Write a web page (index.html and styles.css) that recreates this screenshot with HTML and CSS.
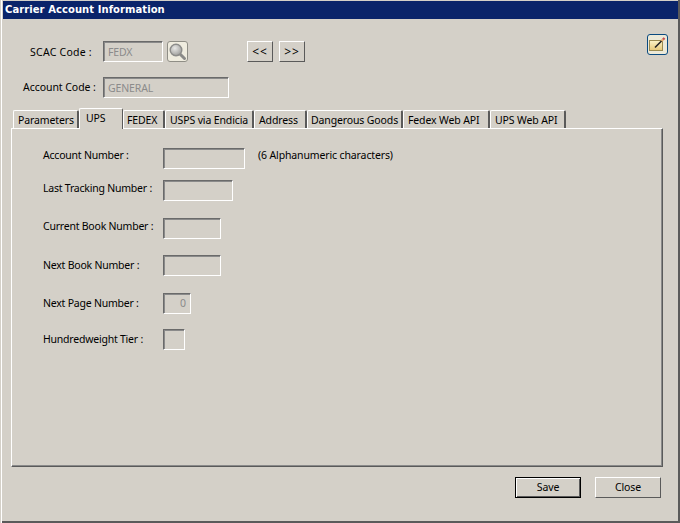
FILE: index.html
```html
<!DOCTYPE html>
<html lang="en">
<head>
<meta charset="utf-8">
<title>Carrier Account Information</title>
<link rel="stylesheet" href="styles.css">
</head>
<body>
<div class="window">
  <div class="titlebar">Carrier Account Information</div>
  <div class="head">
    <div class="head-row">
      <span class="label scac-label">SCAC Code :</span>
      <input class="field scac-input" value="FEDX" disabled>
      <button class="search-btn" type="button" aria-label="Search">
        <svg width="19" height="19" viewBox="0 0 19 19">
          <defs><radialGradient id="lens" cx="0.4" cy="0.35" r="0.7"><stop offset="0" stop-color="#e8e8e6"/><stop offset="1" stop-color="#9a9a98"/></radialGradient></defs>
          <path d="M11.5 11.5 L16.5 16.5" stroke="#8a8a88" stroke-width="3" stroke-linecap="round"/>
          <circle cx="8" cy="8" r="5.8" fill="url(#lens)" stroke="#8c8c8a" stroke-width="1.4"/>
        </svg>
      </button>
      <button class="nav-btn nav-first" type="button">&lt;&lt;</button>
      <button class="nav-btn nav-next" type="button">&gt;&gt;</button>
      <button class="edit-btn" type="button" aria-label="Edit">
        <svg width="17" height="15" viewBox="0 0 17 15">
          <defs><linearGradient id="pad" x1="0" y1="0" x2="0" y2="1"><stop offset="0" stop-color="#fbf3c8"/><stop offset="1" stop-color="#e6c878"/></linearGradient></defs>
          <rect x="0.5" y="3.5" width="13" height="10" fill="url(#pad)" stroke="#9a8a50"/>
          <path d="M6 10.5 L13 3.5" stroke="#222" stroke-width="1.6"/>
          <path d="M12.5 4 L14 2.5" stroke="#e8b070" stroke-width="2.4"/>
          <path d="M14 2.5 L15.5 1" stroke="#c85050" stroke-width="2.4"/>
        </svg>
      </button>
    </div>
    <div class="head-row account-row">
      <span class="label account-label">Account Code :</span>
      <input class="field account-input" value="GENERAL" disabled>
    </div>
  </div>
  <div class="tabs">
    <div class="tab t1">Parameters</div>
    <div class="tab tab-active t2">UPS</div>
    <div class="tab t3">FEDEX</div>
    <div class="tab t4">USPS via Endicia</div>
    <div class="tab t5">Address</div>
    <div class="tab t6">Dangerous Goods</div>
    <div class="tab t7">Fedex Web API</div>
    <div class="tab t8">UPS Web API</div>
  </div>
  <div class="panel">
    <div class="row r1">
      <span class="label row-label up3">Account Number :</span>
      <span class="field w82"></span>
      <span class="label hint">(6 Alphanumeric characters)</span>
    </div>
    <div class="row r2">
      <span class="label row-label up2">Last Tracking Number :</span>
      <span class="field w70"></span>
    </div>
    <div class="row r3">
      <span class="label row-label up2">Current Book Number :</span>
      <span class="field w58"></span>
    </div>
    <div class="row r4">
      <span class="label row-label">Next Book Number :</span>
      <span class="field w58"></span>
    </div>
    <div class="row r5">
      <span class="label row-label">Next Page Number :</span>
      <span class="field w28 num">0</span>
    </div>
    <div class="row r6">
      <span class="label row-label">Hundredweight Tier :</span>
      <span class="field w22"></span>
    </div>
  </div>
  <div class="actions">
    <button class="action default" type="button">Save</button>
    <button class="action" type="button">Close</button>
  </div>
</div>
</body>
</html>
```
FILE: styles.css
```css
* { box-sizing: border-box; }
html, body { margin: 0; padding: 0; }
body {
  width: 680px;
  height: 523px;
  overflow: hidden;
  background: #d4d0c8;
  font-family: "Noto Sans", sans-serif;
  font-size: 10.5px;
  letter-spacing: -0.13px;
  color: #000;
}
.window {
  width: 680px;
  height: 523px;
  padding: 1px 2px 2px 3px;
  background: #d4d0c8;
  box-shadow: inset 1px 0 0 #d4d0c8, inset 2px 0 0 #ffffff, inset -2px -2px 0 #5a5a5a;
  display: flex;
  flex-direction: column;
}
.titlebar {
  height: 18px;
  flex: none;
  background: #0a246a;
  color: #fff;
  font-family: "DejaVu Sans", sans-serif;
  font-weight: bold;
  font-size: 10px;
  letter-spacing: 0.07px;
  line-height: 17px;
  padding-left: 2px;
}
.head { padding-top: 15px; flex: none; height: 89px; }
.head-row { display: flex; align-items: flex-start; }
.label { white-space: nowrap; line-height: 12px; }
.field {
  display: block;
  height: 21px;
  flex: none;
  background: #d4d0c8;
  border: 1px solid;
  border-color: #6a6a6a #fff #fff #6a6a6a;
  box-shadow: inset 0 1px 0 #8a8a8a, inset 1px 0 0 #8a8a8a;
  font: inherit;
  letter-spacing: inherit;
  color: #8b8b8b;
  padding: 0 4px;
  line-height: 18px;
  margin: 0;
  -webkit-text-fill-color: #8b8b8b;
  opacity: 1;
}
.scac-label { width: 100px; padding: 5px 0 0 27px; margin-top: 7px; letter-spacing: 0.25px; }
.field.scac-input { width: 60px; margin-top: 7px; }
.search-btn {
  width: 21px;
  height: 21px;
  margin: 7px 0 0 4px;
  padding: 0;
  flex: none;
  background: #efecdf;
  border: 1px solid #8f8e86;
  border-radius: 3px;
  display: flex;
  align-items: center;
  justify-content: center;
}
.nav-btn, .action {
  font: inherit;
  letter-spacing: inherit;
  color: #000;
  background: #d4d0c8;
  border: 1px solid;
  border-color: #fff #5a5a5a #5a5a5a #fff;
  padding: 0;
  flex: none;
}
.nav-btn { width: 26px; height: 21px; margin-top: 7px; font-size: 12px; letter-spacing: 1px; }
.nav-first { margin-left: 59px; }
.nav-next { margin-left: 6px; }
.edit-btn {
  width: 21px;
  height: 21px;
  margin-left: 342px;
  padding: 0;
  flex: none;
  background: #ece9d8;
  border: 1px solid #0a4a80;
  border-radius: 3px;
  display: flex;
  align-items: center;
  justify-content: center;
}
.account-row { margin-top: 15px; }
.account-label { width: 100px; padding: 4px 0 0 20px; margin-top: 0; letter-spacing: -0.05px; }
.field.account-input { width: 126px; }
.tabs {
  display: flex;
  flex: none;
  height: 20px;
  padding-left: 10px;
  align-items: flex-end;
  position: relative;
  z-index: 1;
}
.tab {
  height: 18px;
  padding: 3px 0 0 4px;
  line-height: 12px;
  white-space: nowrap;
  background: #d4d0c8;
  border-top: 1px solid #fff;
  border-left: 1px solid #fff;
  border-right: 2px solid #5a5a5a;
  border-top-left-radius: 2px;
  border-top-right-radius: 2px;
}
.t1 { width: 66px; }
.t3 { width: 42px; padding-left: 3px; }
.t4 { width: 89px; }
.t5 { width: 53px; }
.t6 { width: 96px; padding-left: 3px; }
.t7 { width: 87px; }
.t8 { width: 76px; }
.tab.tab-active {
  height: 21px;
  width: 44px;
  padding: 3px 0 0 6px;
  margin-bottom: -1px;
  border-right: 1px solid #5a5a5a;
}
.panel {
  width: 652px;
  height: 339px;
  margin-left: 8px;
  flex: none;
  border: 1px solid;
  border-color: #fff #5a5a5a #5a5a5a #fff;
  box-shadow: inset -1px -1px 0 #8a8a8a;
  padding-left: 31px;
}
.row { display: flex; align-items: flex-start; height: 21px; }
.row-label { width: 120px; padding-top: 4px; letter-spacing: -0.22px; }
.row-label.up3 { padding-top: 1px; }
.row-label.up2 { padding-top: 2px; }
.r1 { margin-top: 19px; }
.r2 { margin-top: 11px; }
.r3 { margin-top: 17px; }
.r4 { margin-top: 16px; }
.r5 { margin-top: 17px; }
.r6 { margin-top: 15px; }
.w82 { width: 82px; }
.w70 { width: 70px; }
.w58 { width: 58px; }
.w28 { width: 28px; }
.w22 { width: 22px; }
.num { text-align: right; }
.hint { margin-left: 13px; padding-top: 1px; }
.actions {
  display: flex;
  justify-content: flex-end;
  gap: 14px;
  padding: 10px 17px 0 0;
}
.action { width: 66px; height: 21px; padding-bottom: 2px; }
.action.default { border-color: #000; box-shadow: inset 1px 1px 0 #fff, inset -1px -1px 0 #5a5a5a; }
```
